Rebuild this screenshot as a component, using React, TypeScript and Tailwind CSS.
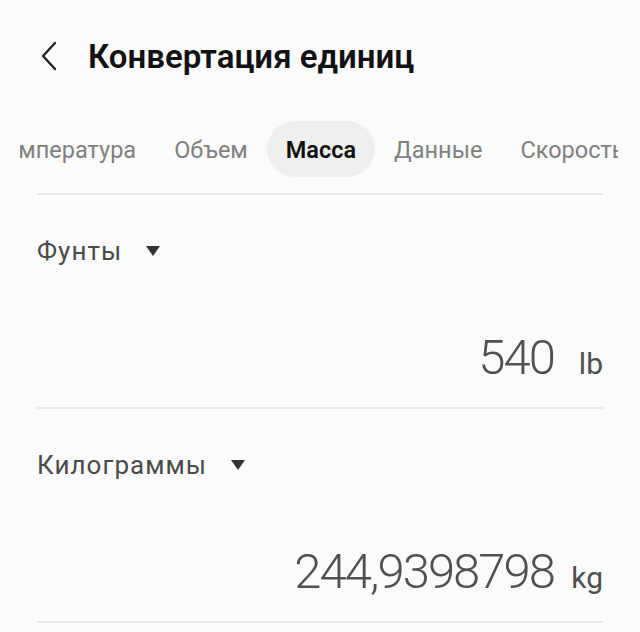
import React from "react";

function Triangle() {
  return (
    <svg width="16" height="12" viewBox="0 0 16 12" className="shrink-0">
      <path d="M1 1 L15 1 L8 11 Z" fill="#333333" />
    </svg>
  );
}

function Section({ label, value, unit }: { label: string; value: string; unit: string }) {
  return (
    <div className="mx-[37px] h-[214px] flex flex-col border-b-2 border-[#e9e9e9]">
      <div className="h-[60px] mt-[26px] flex items-center gap-[23px]">
        <span className="text-[26px] tracking-[0.04em] text-[#4a4a4a] leading-none">{label}</span>
        <Triangle />
      </div>
      <div className="mt-[52px] flex justify-end items-baseline">
        <span className="text-[49px] font-light leading-none tracking-[-0.04em] text-[#505050]">{value}</span>
        <span className="w-[49px] text-right text-[30px] leading-none text-[#505050]">{unit}</span>
      </div>
    </div>
  );
}

export default function App() {
  const tabs = ["Температура", "Объем", "Масса", "Данные", "Скорость", "Время"];
  return (
    <div
      className="w-[640px] h-[632px] bg-[#fbfbfb] overflow-hidden"
      style={{ fontFamily: "Roboto, 'Noto Sans', sans-serif" }}
    >
      <header className="h-[112px] flex items-center pl-[40px]">
        <svg width="18" height="30" viewBox="0 0 18 30" className="shrink-0">
          <path d="M15 2 L3 15 L15 28" fill="none" stroke="#222" strokeWidth="2.4" strokeLinecap="round" strokeLinejoin="round" />
        </svg>
        <h1 className="ml-[30px] text-[33px] font-semibold text-[#111] leading-none">Конвертация единиц</h1>
      </header>
      <div className="ml-5 mr-[22px] mt-[9px] h-[56px] overflow-hidden">
        <div className="flex h-full ml-[-46px]">
          {tabs.map((t) => (
            <div
              key={t}
              className={
                t === "Масса"
                  ? "h-full px-[19px] pt-[3px] flex items-center rounded-full bg-[#efefef] text-[23.5px] font-semibold text-[#111] whitespace-nowrap"
                  : "h-full px-[19px] pt-[3px] flex items-center rounded-full text-[23.5px] text-[#808080] whitespace-nowrap"
              }
            >
              {t}
            </div>
          ))}
        </div>
      </div>
      <div className="mx-[37px] mt-[16px] border-t-2 border-[#e9e9e9]" />
      <Section label="Фунты" value="540" unit="lb" />
      <Section label="Килограммы" value="244,9398798" unit="kg" />
    </div>
  );
}
